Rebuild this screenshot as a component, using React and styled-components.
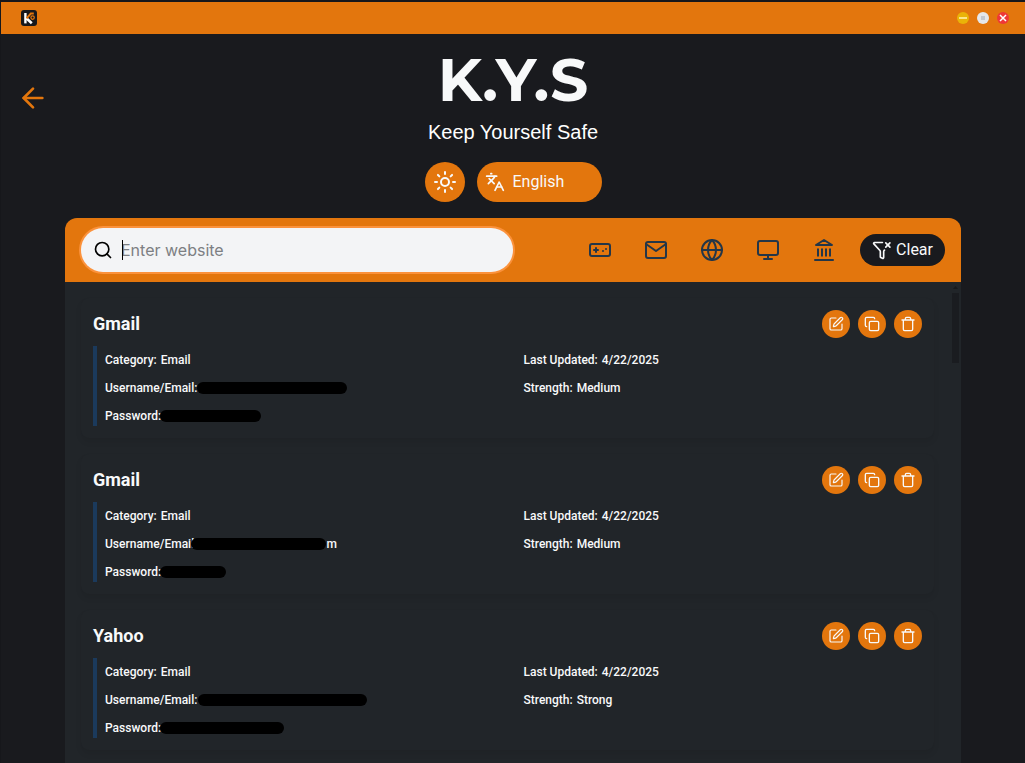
import React from "react";
import styled, { createGlobalStyle } from "styled-components";
import { ArrowLeft, Sun, Languages, Search, Gamepad, Globe, Monitor, FunnelX, SquarePen, Copy } from "lucide-react";
import { FiMail } from "react-icons/fi";

const orange = "#e3760d";
const night = "#191a1e";
const slate = "#212529";
const navy = "#233648";

const GlobalStyle = createGlobalStyle`
  *, *::before, *::after { box-sizing: border-box; }
  body {
    margin: 0;
    background: ${night};
    color: #f8f9fa;
    font-family: Roboto, "Liberation Sans", sans-serif;
  }
  button, input, select { font: inherit; color: inherit; border: 0; padding: 0; margin: 0; }
  button { cursor: pointer; }
  svg { display: block; flex: none; }
`;

const Shell = styled.div`
  display: flex;
  flex-direction: column;
  height: 100vh;
  overflow: hidden;
  border-top: 2px solid #16171b;
  border-left: 1px solid #16171b;
`;

const TitleBar = styled.header`
  flex: none;
  display: flex;
  align-items: center;
  justify-content: space-between;
  height: 32px;
  padding: 0 16px 0 20px;
  background: ${orange};
`;

const WindowControls = styled.div`
  display: flex;
  gap: 8px;
`;

const WindowButton = styled.button`
  display: grid;
  place-items: center;
  width: 12px;
  height: 12px;
  border-radius: 50%;
  background: ${(p) => p.$color};
`;

const Hero = styled.section`
  flex: none;
  display: grid;
  grid-template-columns: 1fr auto 1fr;
  padding: 16px;
`;

const BackButton = styled.button`
  width: 32px;
  height: 32px;
  margin-top: 32px;
  background: none;
  color: ${orange};
`;

const Brand = styled.div`
  display: flex;
  flex-direction: column;
  align-items: center;
`;

const Title = styled.h1`
  margin: 0;
  font: 700 60px/60px Montserrat, Lato, sans-serif;
`;

const Tagline = styled.p`
  margin: 8px 0 16px;
  font: 20px/28px "Liberation Sans", Arial, sans-serif;
  color: #fff;
`;

const Preferences = styled.div`
  display: flex;
  gap: 12px;
`;

const ThemeButton = styled.button`
  display: grid;
  place-items: center;
  width: 40px;
  height: 40px;
  border-radius: 50%;
  background: ${orange};
`;

const LanguagePicker = styled.label`
  display: flex;
  align-items: center;
  gap: 8px;
  width: 125px;
  height: 40px;
  padding: 0 8px;
  border-radius: 20px;
  background: ${orange};
`;

const LanguageSelect = styled.select`
  appearance: none;
  flex: 1;
  min-width: 0;
  background: transparent;
  font-size: 16px;
  line-height: 24px;
  outline: none;
`;

const Vault = styled.main`
  flex: 1;
  min-height: 0;
  display: flex;
  flex-direction: column;
  width: calc(100% - 128px);
  max-width: 896px;
  margin: 0 auto;
`;

const Toolbar = styled.div`
  flex: none;
  display: flex;
  align-items: center;
  justify-content: space-between;
  height: 64px;
  padding: 0 16px;
  border-radius: 12px 12px 0 0;
  background: ${orange};
`;

const SearchBox = styled.label`
  position: relative;
  display: flex;
  align-items: center;
  gap: 8px;
  width: 50%;
  height: 44px;
  padding: 0 12px;
  border-radius: 22px;
  background: #f3f4f6;
  box-shadow: 0 0 0 2px #fb923c;
  color: #000;
`;

const Caret = styled.span`
  position: absolute;
  left: 41px;
  top: 12px;
  width: 1px;
  height: 20px;
  background: #000;
`;

const SearchInput = styled.input`
  flex: 1;
  min-width: 0;
  background: transparent;
  font: 16px/24px Inter, sans-serif;
  outline: none;
  &::placeholder { color: #7d7f83; opacity: 1; }
`;

const Filters = styled.nav`
  display: flex;
  align-items: center;
  gap: 16px;
`;

const FilterButton = styled.button`
  display: grid;
  place-items: center;
  width: 40px;
  height: 40px;
  background: none;
  color: ${navy};
`;

const ClearButton = styled.button`
  display: flex;
  align-items: center;
  gap: 4px;
  height: 32px;
  padding: 0 12px;
  border-radius: 16px;
  background: ${night};
  font-size: 16px;
  line-height: 24px;
`;

const ListArea = styled.div`
  flex: 1;
  min-height: 0;
  display: flex;
  background: ${slate};
`;

const List = styled.div`
  flex: 1;
  min-width: 0;
  display: flex;
  flex-direction: column;
  gap: 16px;
  padding: 16px;
  overflow: hidden;
`;

const ScrollTrack = styled.div`
  display: flex;
  flex-direction: column;
  align-items: center;
  gap: 4px;
  width: 11px;
  padding-top: 4px;
`;

const ScrollThumb = styled.div`
  width: 7px;
  height: 70px;
  background: #1a1c20;
`;

const Entry = styled.article`
  flex: none;
  display: flex;
  flex-direction: column;
  gap: 8px;
  padding: 12px;
  border-radius: 8px;
  background: ${slate};
  box-shadow: 0 4px 6px rgba(0, 0, 0, 0.07);
`;

const EntryHeader = styled.div`
  display: flex;
  align-items: center;
  justify-content: space-between;
`;

const EntryName = styled.h2`
  margin: 0;
  font-size: 18px;
  line-height: 28px;
  font-weight: 700;
`;

const Actions = styled.div`
  display: flex;
  gap: 8px;
`;

const ActionButton = styled.button`
  display: grid;
  place-items: center;
  width: 28px;
  height: 28px;
  border-radius: 50%;
  background: ${orange};
`;

const Details = styled.div`
  display: grid;
  grid-template-columns: 1fr 1fr;
  gap: 20px;
  padding-left: 8px;
  border-left: 4px solid #1b3a5c;
`;

const Column = styled.div`
  display: flex;
  flex-direction: column;
  gap: 4px;
`;

const Field = styled.div`
  display: flex;
  align-items: center;
  height: 24px;
  padding-top: 4px;
  font-size: 12px;
  line-height: 20px;
  font-weight: 500;
`;

const Value = styled.span`
  margin-left: 4px;
`;

const Redaction = styled.span`
  position: relative;
  width: ${(p) => p.$width}px;
  height: 12px;
  margin-left: ${(p) => -p.$cover}px;
  border-radius: 6px;
  background: #000;
`;

const Logo = () => (
  <svg width="16" height="16" viewBox="0 0 16 16" aria-hidden="true">
    <rect width="16" height="16" rx="3" fill="#17181c" />
    <path d="M4.4 3v10.4" stroke="#fff" strokeWidth="2.4" />
    <path d="M5.4 8.2l5.4 5" stroke="#fff" strokeWidth="2.6" />
    <path d="M5.6 8.4l4.2-4.8h3" stroke={orange} strokeWidth="2" fill="none" />
    <circle cx="11.6" cy="7.6" r="1.7" stroke={orange} strokeWidth="1.2" fill="none" />
  </svg>
);

const Bank = () => (
  <svg width="24" height="24" viewBox="0 0 24 24" fill="none" stroke="currentColor" strokeWidth="2" strokeLinejoin="round" aria-hidden="true">
    <path d="M3 22h18" strokeLinecap="round" />
    <path d="M6 18.5v-8M10 18.5v-8M14 18.5v-8M18 18.5v-8" />
    <path d="M12 2l8 5H4z" />
  </svg>
);

const Bin = () => (
  <svg width="16" height="16" viewBox="0 0 24 24" fill="none" stroke="currentColor" strokeWidth="2" strokeLinecap="round" strokeLinejoin="round" aria-hidden="true">
    <path d="M3 6h18M19 6v14a2 2 0 0 1-2 2H7a2 2 0 0 1-2-2V6M8 6V4a2 2 0 0 1 2-2h4a2 2 0 0 1 2 2v2" />
  </svg>
);

const filters = [
  ["Games", <Gamepad size={24} />],
  ["Email", <FiMail size={24} />],
  ["Web", <Globe size={24} />],
  ["Apps", <Monitor size={24} />],
  ["Bank", <Bank />],
];

const entries = [
  { name: "Gmail", strength: "Medium", user: { width: 150, cover: 0 }, pass: { width: 101, cover: 1 } },
  { name: "Gmail", strength: "Medium", user: { width: 135, cover: 6, tail: "m" }, pass: { width: 66, cover: 1 } },
  { name: "Yahoo", strength: "Strong", user: { width: 169, cover: -1 }, pass: { width: 124, cover: 1 } },
];

const Secret = ({ label, data }) => (
  <Field>
    <span>{label}:</span>
    <Redaction $width={data.width} $cover={data.cover} />
    {data.tail}
  </Field>
);

export default function App() {
  return (
    <Shell>
      <GlobalStyle />
      <TitleBar>
        <Logo />
        <WindowControls>
          <WindowButton $color="#eab308" aria-label="Minimize">
            <svg width="8" height="8" viewBox="0 0 8 8"><path d="M0 4h8" stroke="#fbe58a" strokeWidth="2" /></svg>
          </WindowButton>
          <WindowButton $color="#e5e7eb" aria-label="Maximize">
            <svg width="4" height="4" viewBox="0 0 4 4"><path d="M0 0h4v4H0z" fill="#c3c8d0" /></svg>
          </WindowButton>
          <WindowButton $color="#ef3737" aria-label="Close">
            <svg width="8" height="8" viewBox="0 0 8 8"><path d="M1 1l6 6M7 1L1 7" stroke="#fff" strokeWidth="1.5" /></svg>
          </WindowButton>
        </WindowControls>
      </TitleBar>
      <Hero>
        <BackButton aria-label="Back"><ArrowLeft size={32} /></BackButton>
        <Brand>
          <Title>K.Y.S</Title>
          <Tagline>Keep Yourself Safe</Tagline>
          <Preferences>
            <ThemeButton aria-label="Toggle theme"><Sun size={24} /></ThemeButton>
            <LanguagePicker>
              <Languages size={20} />
              <LanguageSelect aria-label="Language"><option>English</option></LanguageSelect>
            </LanguagePicker>
          </Preferences>
        </Brand>
      </Hero>
      <Vault>
        <Toolbar>
          <SearchBox>
            <Search size={20} />
            <SearchInput placeholder="Enter website" aria-label="Website" />
            <Caret />
          </SearchBox>
          <Filters>
            {filters.map(([name, icon]) => <FilterButton key={name} aria-label={name}>{icon}</FilterButton>)}
            <ClearButton><FunnelX size={20} />Clear</ClearButton>
          </Filters>
        </Toolbar>
        <ListArea>
          <List>
            {entries.map((e, i) => (
              <Entry key={i}>
                <EntryHeader>
                  <EntryName>{e.name}</EntryName>
                  <Actions>
                    <ActionButton aria-label="Edit"><SquarePen size={16} strokeWidth={1.75} /></ActionButton>
                    <ActionButton aria-label="Copy"><Copy size={16} /></ActionButton>
                    <ActionButton aria-label="Delete"><Bin /></ActionButton>
                  </Actions>
                </EntryHeader>
                <Details>
                  <Column>
                    <Field>Category:<Value>Email</Value></Field>
                    <Secret label="Username/Email" data={e.user} />
                    <Secret label="Password" data={e.pass} />
                  </Column>
                  <Column>
                    <Field>Last Updated:<Value>4/22/2025</Value></Field>
                    <Field>Strength:<Value>{e.strength}</Value></Field>
                  </Column>
                </Details>
              </Entry>
            ))}
          </List>
          <ScrollTrack>
            <svg width="5" height="3" viewBox="0 0 5 3"><path d="M0 3l2.5-3L5 3z" fill="#17191c" /></svg>
            <ScrollThumb />
          </ScrollTrack>
        </ListArea>
      </Vault>
    </Shell>
  );
}
